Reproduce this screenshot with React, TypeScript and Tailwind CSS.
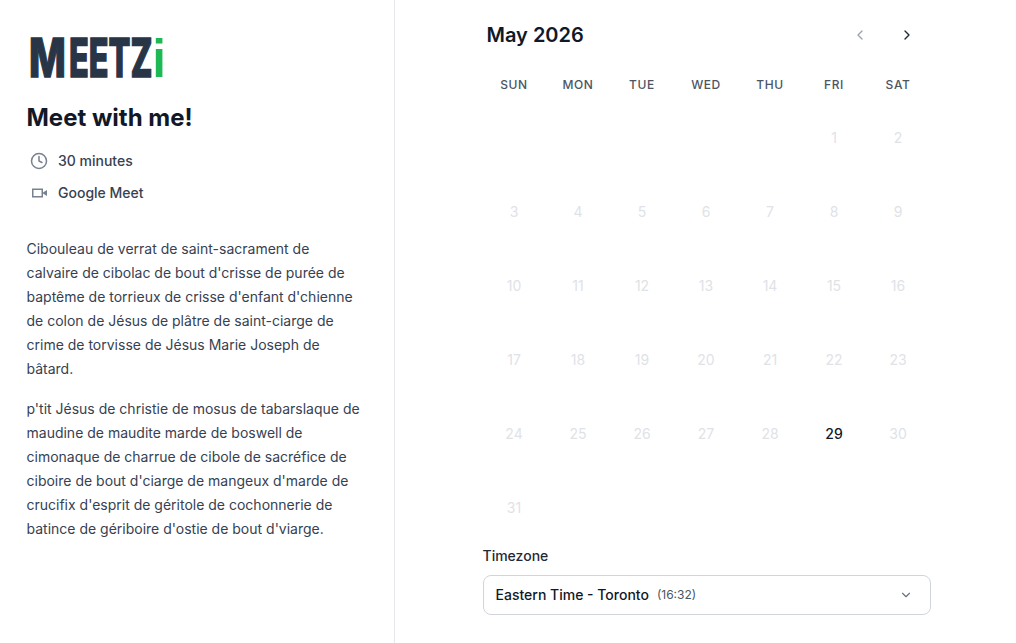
import { ChevronDown, ChevronLeft, ChevronRight, Clock } from "lucide-react";

const WEEKDAYS = ["SUN", "MON", "TUE", "WED", "THU", "FRI", "SAT"];
const LEADING_BLANKS = 5;
const DAYS = Array.from({ length: 31 }, (_, i) => i + 1);

function Logo() {
  return (
    <svg width="140" height="46" viewBox="0 0 140 46" className="block overflow-visible" aria-label="Meetzi">
      <g fontWeight="800" fontSize="53">
        <text
          transform="translate(-1 41.5) scale(0.737 1)"
          fontFamily="Inter, sans-serif"
          fill="#283546"
          stroke="#283546"
          strokeWidth="1.4"
        >
          M
        </text>
        <text
          transform="translate(39 41.5) scale(0.612 1)"
          fontFamily="Inter, sans-serif"
          fill="#283546"
          stroke="#283546"
          strokeWidth="1.4"
        >
          EETZ
        </text>
        <text transform="translate(122.5 41.5) scale(0.9 1)" fontFamily="Liberation Sans, sans-serif" fill="#1db954">
          i
        </text>
      </g>
    </svg>
  );
}

function VideoIcon() {
  return (
    <svg width="18" height="18" viewBox="0 0 18 18" className="text-[#78818f]">
      <rect x="2.75" y="5.25" width="9.5" height="7.5" fill="none" stroke="currentColor" strokeWidth="1.5" />
      <path d="M13 8.5 L17 6 V12 L13 9.5 Z" fill="currentColor" />
    </svg>
  );
}

export default function App() {
  return (
    <div className="flex h-[643px] w-[1016px] overflow-hidden bg-white font-['Inter',sans-serif] text-[#111827]">
      <aside className="w-[395px] shrink-0 border-r border-[#e5e7eb] pl-[26.5px] pr-[30px] pt-[35px]">
        <div className="pl-[3.5px]">
          <Logo />
        </div>
        <h1 className="mt-[21px] text-2xl leading-8 font-bold text-[#111827]">Meet with me!</h1>
        <div className="mt-[11px] flex h-8 items-center gap-[10px] pl-[3.5px] text-sm font-medium text-[#374151]">
          <Clock className="h-[18px] w-[18px] text-[#78818f]" strokeWidth={2} />
          30 minutes
        </div>
        <div className="flex h-8 items-center gap-[10px] pl-[3.5px] text-sm font-medium text-[#374151]">
          <VideoIcon />
          Google Meet
        </div>
        <div className="mt-[28px] space-y-4 text-sm leading-6 text-[#374151]">
          <p>
            Cibouleau de verrat de saint-sacrament de calvaire de cibolac de bout d'crisse de purée de baptême de
            torrieux de crisse d'enfant d'chienne de colon de Jésus de plâtre de saint-ciarge de crime de torvisse de
            Jésus Marie Joseph de bâtard.
          </p>
          <p>
            p'tit Jésus de christie de mosus de tabarslaque de maudine de maudite marde de boswell de cimonaque de
            charrue de cibole de sacréfice de ciboire de bout d'ciarge de mangeux d'marde de crucifix d'esprit de
            géritole de cochonnerie de batince de gériboire d'ostie de bout d'viarge.
          </p>
        </div>
      </aside>

      <main className="ml-[87px] w-[448px] pt-[19px]">
        <div className="flex h-8 items-center justify-between pl-[4.5px] pr-[15px]">
          <h2 className="text-xl font-semibold text-[#111827]">May 2026</h2>
          <div className="flex items-center gap-[31px]">
            <ChevronLeft className="h-4 w-4 text-[#9ca3af]" />
            <ChevronRight className="h-4 w-4 text-[#1f2937]" />
          </div>
        </div>
        <div className="mt-[26px] grid grid-cols-7 text-center text-xs leading-4 font-medium tracking-[0.05em] text-[#4b5563]">
          {WEEKDAYS.map((day) => (
            <div key={day}>{day}</div>
          ))}
        </div>
        <div className="mt-2 grid grid-cols-7 auto-rows-[74px] text-center text-sm">
          {Array.from({ length: LEADING_BLANKS }, (_, i) => (
            <div key={i} />
          ))}
          {DAYS.map((day) => (
            <div
              key={day}
              className={
                day === 29
                  ? "flex items-center justify-center font-medium text-[#111827]"
                  : "flex items-center justify-center text-[#dfe2e7]"
              }
            >
              {day}
            </div>
          ))}
        </div>
        <label className="mt-px block pl-[0.5px] text-sm leading-5 font-medium text-[#1f2937]">Timezone</label>
        <div className="ml-[1px] mt-[9px] flex h-10 w-[448px] items-center justify-between rounded-lg border border-[#d1d5db] pl-[11.5px] pr-[17px]">
          <div className="flex items-center gap-2">
            <span className="text-sm font-medium text-[#111827]">Eastern Time - Toronto</span>
            <span className="text-xs text-[#4b5563]">(16:32)</span>
          </div>
          <ChevronDown className="h-3.5 w-3.5 text-[#6b7280]" />
        </div>
      </main>
    </div>
  );
}
